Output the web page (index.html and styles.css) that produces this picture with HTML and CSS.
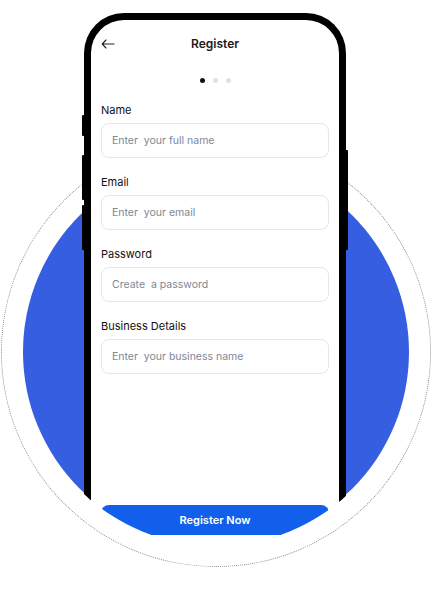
FILE: index.html
```html
<!DOCTYPE html>
<html lang="en">
<head>
<meta charset="utf-8">
<title>Register</title>
<link rel="stylesheet" href="styles.css">
</head>
<body>
<div class="scene">
  <div class="ring"></div>
  <div class="disc"></div>
  <div class="clip">
    <div class="phone">
      <span class="key key-mute"></span>
      <span class="key key-up"></span>
      <span class="key key-down"></span>
      <span class="key key-power"></span>
      <div class="screen">
        <header class="bar">
          <svg class="back" width="14" height="14" viewBox="0 0 14 14" fill="none" stroke="#222" stroke-width="1.1" stroke-linecap="round" stroke-linejoin="round"><path d="M13 7H1.2M5 3L1.2 7L5 11"/></svg>
          <h1 class="title">Register</h1>
          <span></span>
        </header>
        <div class="dots"><i class="dot on"></i><i class="dot"></i><i class="dot"></i></div>
        <div class="fields">
          <div class="field">
            <div class="label">Name</div>
            <div class="input"><span class="ph">Enter&nbsp; your full name</span></div>
          </div>
          <div class="field">
            <div class="label">Email</div>
            <div class="input"><span class="ph">Enter&nbsp; your email</span></div>
          </div>
          <div class="field">
            <div class="label">Password</div>
            <div class="input"><span class="ph">Create&nbsp; a password</span></div>
          </div>
          <div class="field">
            <div class="label">Business Details</div>
            <div class="input"><span class="ph">Enter&nbsp; your business name</span></div>
          </div>
        </div>
        <button class="cta">Register Now</button>
      </div>
    </div>
  </div>
</div>
</body>
</html>
```
FILE: styles.css
```css
* { box-sizing: border-box; }
html, body { margin: 0; padding: 0; background: #fff; }
body { font-family: Inter, "Noto Sans", sans-serif; }

.scene {
  position: relative;
  width: 432px;
  height: 608px;
  overflow: hidden;
}

.ring {
  position: absolute;
  left: 1px;
  top: 137px;
  width: 430px;
  height: 430px;
  border: 1px dotted #8c8c8c;
  border-radius: 50%;
}

.disc {
  position: absolute;
  left: 23px;
  top: 159px;
  width: 386px;
  height: 386px;
  border-radius: 50%;
  background: #355ee0;
}

.clip {
  position: absolute;
  left: 22px;
  top: 0;
  width: 388px;
  height: 546px;
  border-radius: 0 0 194px 194px / 0 0 194px 194px;
  overflow: hidden;
}

.phone {
  position: absolute;
  left: 62px;
  top: 13px;
  width: 262px;
  height: 533px;
  border: 7px solid #000;
  border-bottom: 0;
  border-radius: 40px 40px 0 0;
  background: #fff;
}

.key {
  position: absolute;
  width: 4px;
  background: #000;
  border-radius: 1px;
}
.key-mute { left: -9px; top: 95px; height: 21px; }
.key-up { left: -9px; top: 135px; height: 45px; }
.key-down { left: -9px; top: 185px; height: 45px; }
.key-power { right: -9px; top: 130px; height: 100px; }

.screen {
  display: flex;
  flex-direction: column;
  height: 100%;
}

.bar {
  display: grid;
  grid-template-columns: 14px 1fr 14px;
  align-items: center;
  height: 48px;
  padding: 0 10px;
}
.back { display: block; }
.title {
  margin: 0;
  text-align: center;
  font-size: 12px;
  font-weight: 600;
  color: #1a1a1a;
  line-height: 16px;
}

.dots {
  display: flex;
  justify-content: center;
  gap: 8px;
  margin-top: 10px;
}
.dot {
  display: block;
  width: 5px;
  height: 5px;
  border-radius: 50%;
  background: #dfe1e7;
}
.dot.on { background: #111; }

.fields {
  display: flex;
  flex-direction: column;
  gap: 17px;
  margin-top: 20px;
  padding: 0 10px;
}
.field {
  display: flex;
  flex-direction: column;
  gap: 6px;
}
.label {
  font-size: 11px;
  line-height: 14px;
  font-weight: 400;
  color: #111;
}
.input {
  display: flex;
  align-items: center;
  height: 35px;
  padding-left: 10px;
  border: 1px solid #e4e6ea;
  border-radius: 8px;
  background: #fff;
}
.ph {
  font-size: 10.5px;
  color: #7e8797;
  white-space: pre;
}

.cta {
  margin: auto 10px 11px;
  height: 30px;
  border: 0;
  border-radius: 8px 8px 0 0;
  background: #115fea;
  color: #fff;
  font-family: Inter, "Noto Sans", sans-serif;
  font-size: 11px;
  font-weight: 600;
  padding: 0;
}
```
